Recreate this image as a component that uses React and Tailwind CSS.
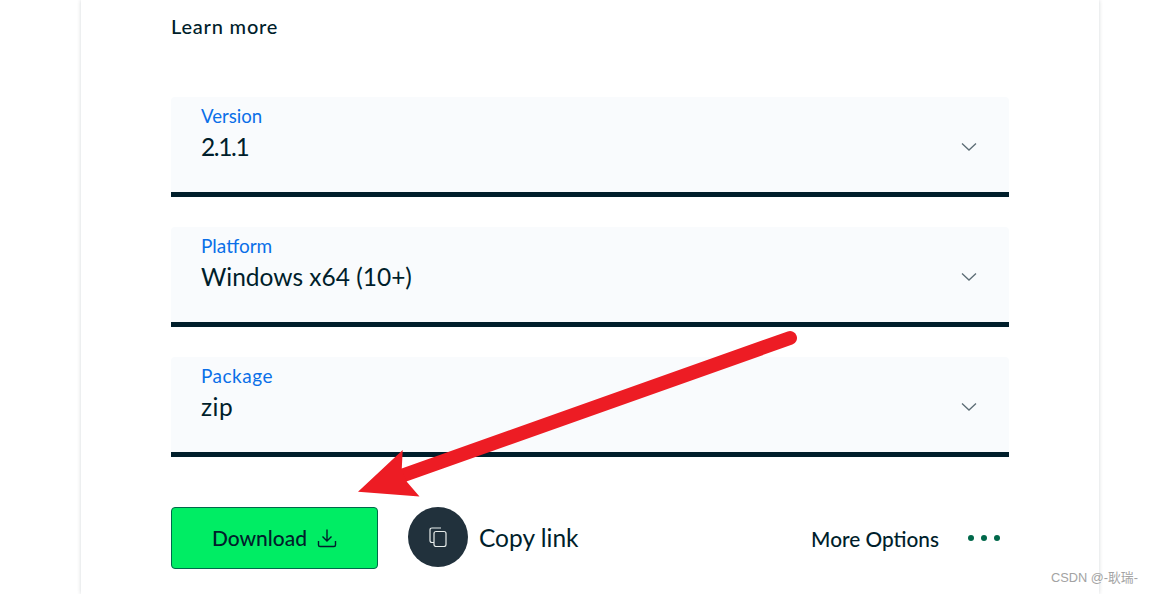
import React from "react";

function Chevron() {
  return (
    <svg width="16" height="10" viewBox="0 0 16 10" fill="none" className="mr-[32px] mt-[4px] shrink-0">
      <path d="M1 1.5 L8 8 L15 1.5" stroke="#5c6c75" strokeWidth="1.3" />
    </svg>
  );
}

function Select({ label, value, labelClass, valueClass }) {
  return (
    <div className="h-[100px] w-full rounded-t-[4px] border-b-[5px] border-[#001e2b] bg-[#f9fbfd] flex items-center justify-between pl-[30px]">
      <div className="flex flex-col self-start pt-[7px]">
        <span className={`leading-[24px] text-[#0a6fe8] ${labelClass}`}>{label}</span>
        <span className={`mt-[1px] text-[24.5px] leading-[36px] text-[#001e2b] ${valueClass}`}>{value}</span>
      </div>
      <Chevron />
    </div>
  );
}

export default function App() {
  return (
    <div className="relative h-[594px] w-[1152px] overflow-hidden bg-white font-['Lato','Liberation_Sans',sans-serif]">
      <div className="ml-[81px] h-[594px] w-[1018px] bg-white pl-[90px] pr-[90px] shadow-[0_0_4px_rgba(0,30,43,0.18)]">
        <div className="pt-[13px] pb-[1px] text-[20px] leading-[26px] font-medium tracking-[0.8px] text-[#001e2b]">Learn more</div>
        <div className="mt-[57px] flex flex-col gap-[30px]">
          <Select label="Version" value="2.1.1" labelClass="text-[18.6px]" valueClass="tracking-[-1.4px]" />
          <Select label="Platform" value="Windows x64 (10+)" labelClass="text-[19px]" valueClass="" />
          <Select label="Package" value="zip" labelClass="text-[19px] tracking-[0.5px]" valueClass="tracking-[0.5px]" />
        </div>
        <div className="mt-[50px] flex items-start">
          <button className="flex h-[62px] w-[207px] items-center justify-center gap-[10px] rounded-[4px] border border-[#00684a] bg-[#00ed64] text-[21px] font-medium text-[#001e2b]">
            Download
            <svg width="20" height="20" viewBox="0 0 20 20" fill="none" stroke="#001e2b" strokeWidth="1.4">
              <path d="M10 1.5 V13 M5.5 8.5 L10 13 L14.5 8.5" />
              <path d="M1.5 13 V17 Q1.5 18.5 3 18.5 H17 Q18.5 18.5 18.5 17 V13" />
            </svg>
          </button>
          <div className="ml-[30px] flex h-[60px] items-center gap-[11px]">
            <div className="flex h-[60px] w-[60px] items-center justify-center rounded-full bg-[#21313c]">
              <svg width="18" height="20" viewBox="0 0 18 20" fill="none" stroke="#e8edeb" strokeWidth="1.2">
                <rect x="5" y="4.5" width="12" height="15" rx="2" />
                <path d="M5 15.5 H3 Q1 15.5 1 13.5 V3 Q1 1 3 1 H12" />
              </svg>
            </div>
            <span className="pt-[2px] text-[24.5px] text-[#001e2b]">Copy link</span>
          </div>
          <div className="ml-auto flex h-[62px] items-center">
            <span className="pt-[1px] text-[20.8px] font-medium text-[#001e2b]">More Options</span>
            <div className="ml-[29px] mr-[9px] flex gap-[7px]">
              <span className="h-[6px] w-[6px] rounded-full bg-[#00684a]" />
              <span className="h-[6px] w-[6px] rounded-full bg-[#00684a]" />
              <span className="h-[6px] w-[6px] rounded-full bg-[#00684a]" />
            </div>
          </div>
        </div>
      </div>

      <svg className="absolute left-0 top-0 pointer-events-none" width="1152" height="594" viewBox="0 0 1152 594">
        <path d="M790 338 L404 475" stroke="#ed1c24" strokeWidth="14" strokeLinecap="round" />
        <polygon points="402.7,450 401.7,470 407,482 419.5,496.5 358,491.7" fill="#ed1c24" />
      </svg>

      <div className="absolute left-[1051px] top-[568px] whitespace-nowrap text-[12.8px] leading-[20px] text-[#a3a3a3] font-['Liberation_Sans','Noto_Sans_CJK_SC',sans-serif]">
        CSDN @-耿瑞-
      </div>
    </div>
  );
}
